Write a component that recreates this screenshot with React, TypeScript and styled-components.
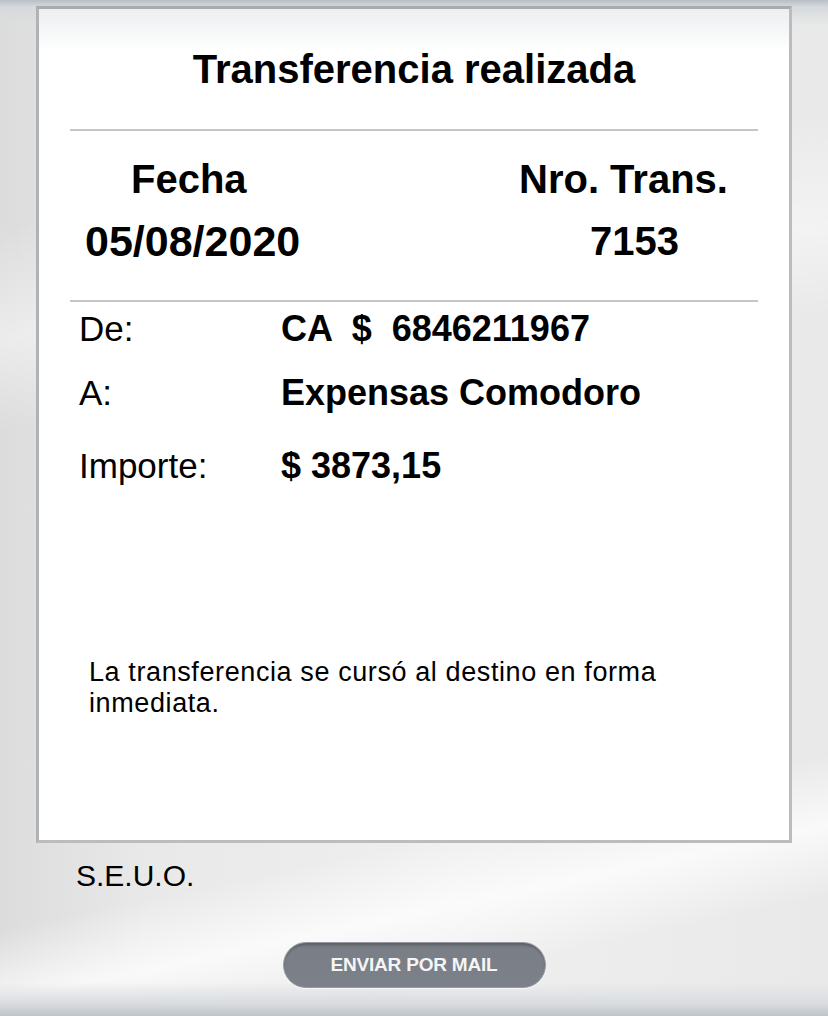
import React from "react";
import styled, { createGlobalStyle } from "styled-components";

const GlobalStyle = createGlobalStyle`
  html, body {
    margin: 0;
    padding: 0;
  }
  body {
    font-family: "Liberation Sans", Arial, Helvetica, sans-serif;
    color: #000;
  }
`;

const Page = styled.div`
  box-sizing: border-box;
  min-height: 1016px;
  padding-top: 6px;
  display: flex;
  flex-direction: column;
  align-items: center;
  background:
    linear-gradient(180deg, #b8bfc5 0px, #d6dadd 7px, rgba(230, 232, 234, 0) 26px),
    linear-gradient(0deg, #bfc4c8 0px, #d9dcdf 12px, rgba(230, 232, 234, 0) 34px),
    linear-gradient(168deg, rgba(255, 255, 255, 0) 78%, rgba(255, 255, 255, 0.75) 84%, rgba(255, 255, 255, 0) 90%),
    linear-gradient(172deg, rgba(255, 255, 255, 0) 20%, rgba(255, 255, 255, 0.45) 30%, rgba(255, 255, 255, 0) 38%),
    linear-gradient(90deg, #dcdcdc 0%, #e9e9e9 18%, #efefef 55%, #e9e9e9 100%);
`;

const Card = styled.section`
  box-sizing: border-box;
  width: 756px;
  height: 837px;
  border: 3px solid #bcbcbc;
  border-top-color: #a7abae;
  border-left-color: #b0b3b5;
  background: linear-gradient(180deg, #eceef0 0px, #ffffff 42px);
  padding: 36px 31px 0;
  display: flex;
  flex-direction: column;
`;

const Title = styled.h1`
  margin: 0;
  font-size: 40px;
  line-height: 48px;
  font-weight: 700;
  text-align: center;
`;

const Divider = styled.hr<{ $top: number }>`
  border: 0;
  margin: ${(p) => p.$top}px 0 0;
  height: 2px;
  background: #c6c6c6;
`;

const HeaderGrid = styled.div`
  margin-top: 24px;
  display: grid;
  grid-template-columns: 344px 1fr;
  row-gap: 14px;
`;

const HeaderCell = styled.div<{ $indent: number; $size?: number }>`
  padding-left: ${(p) => p.$indent}px;
  font-size: ${(p) => p.$size ?? 40}px;
  line-height: 48px;
  font-weight: 700;
  white-space: nowrap;
`;

const Row = styled.div<{ $space: number }>`
  margin-top: ${(p) => p.$space}px;
  padding-left: 9px;
  display: flex;
  align-items: baseline;
`;

const Label = styled.span`
  width: 202px;
  flex: none;
  font-size: 35px;
  line-height: 44px;
  font-weight: 400;
`;

const Value = styled.span`
  font-size: 36px;
  line-height: 44px;
  font-weight: 700;
  white-space: pre;
`;

const Note = styled.p`
  margin: 169px 0 0;
  padding-left: 19px;
  max-width: 620px;
  font-size: 27px;
  line-height: 31px;
  letter-spacing: 0.6px;
`;

const Footer = styled.div`
  width: 756px;
  display: flex;
  flex-direction: column;
  align-items: center;
`;

const Seuo = styled.p`
  align-self: stretch;
  margin: 16px 0 0;
  padding-left: 40px;
  font-size: 30px;
  line-height: 34px;
`;

const MailButton = styled.button`
  box-sizing: border-box;
  margin-top: 49px;
  width: 263px;
  height: 46px;
  border-radius: 23px;
  border: 1px solid #959aa0;
  background: linear-gradient(180deg, #6f747c 0px, #7a7f87 6px, #7c8189 100%);
  box-shadow: 0 1px 1px rgba(255, 255, 255, 0.7), inset 0 2px 2px rgba(0, 0, 0, 0.18);
  color: #f5f5f5;
  font-family: "Liberation Sans", Arial, sans-serif;
  font-size: 19px;
  font-weight: 700;
  letter-spacing: -0.2px;
  display: flex;
  align-items: center;
  justify-content: center;
  padding: 0;
  cursor: pointer;
`;

export default function App() {
  return (
    <>
      <GlobalStyle />
      <Page>
        <Card>
          <Title>Transferencia realizada</Title>
          <Divider $top={36} />
          <HeaderGrid>
            <HeaderCell $indent={61}>Fecha</HeaderCell>
            <HeaderCell $indent={105}>Nro. Trans.</HeaderCell>
            <HeaderCell $indent={15} $size={43}>05/08/2020</HeaderCell>
            <HeaderCell $indent={176}>7153</HeaderCell>
          </HeaderGrid>
          <Divider $top={35} />
          <Row $space={5}>
            <Label>De:</Label>
            <Value>{"CA  $  6846211967"}</Value>
          </Row>
          <Row $space={20}>
            <Label>A:</Label>
            <Value>Expensas Comodoro</Value>
          </Row>
          <Row $space={29}>
            <Label>Importe:</Label>
            <Value>$ 3873,15</Value>
          </Row>
          <Note>La transferencia se cursó al destino en forma inmediata.</Note>
        </Card>
        <Footer>
          <Seuo>S.E.U.O.</Seuo>
          <MailButton type="button">ENVIAR POR MAIL</MailButton>
        </Footer>
      </Page>
    </>
  );
}
